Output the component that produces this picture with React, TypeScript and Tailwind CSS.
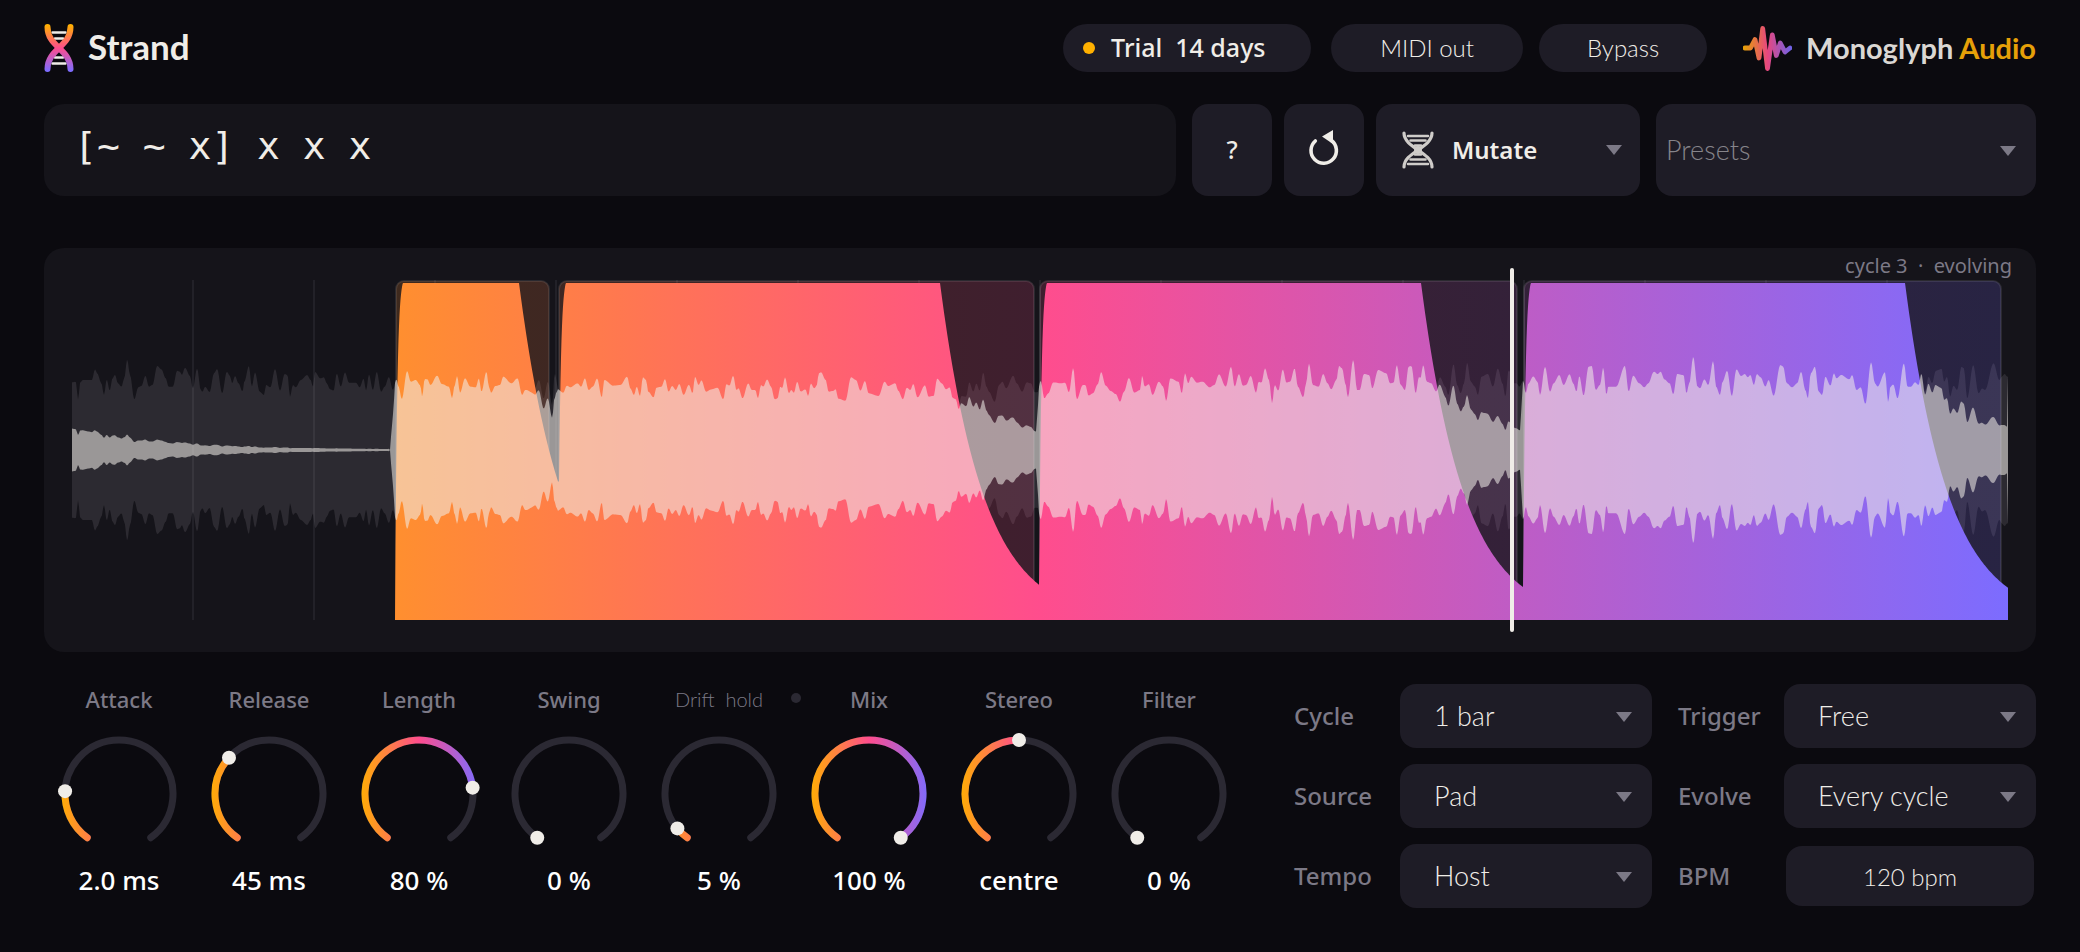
import { useId, useState } from "react";

const UI_FONT = "font-['Noto_Sans','Open_Sans',sans-serif]";
const DISPLAY_FONT = "font-['Lato','Noto_Sans',sans-serif]";

const PLOT_WIDTH = 1936;
const PLOT_TOP = 12;
const PLOT_BOTTOM = 352;
const PLOT_MID = 182;
const ENVELOPE_HEIGHT = 337;
const PLAYHEAD_X = 1440;

// Peak overview in chunks: positions at 2.8 ticks per px, levels at 3 steps per px below `mid`.
const TICKS_PER_PX = 2.8;
const STEPS_PER_PX = 3;

const PEAK_CHUNKS = [
    {
        origin: -32,
        mid: 630,
        data: "90,427 100,425 107,480 112,428 120,420 145,420 154,388 160,400 172,430 179,465 187,418 195,452 203,415 210,404 218,430 228,440 236,415 244,358 252,405 264,478 275,442 284,438 295,407 305,440 315,435 328,378 340,388 352,415 360,440 372,440 384,392 392,395 397,405 406,383 420,408 428,445 440,385 450,450 455,455 462,440 475,456 487,400 496,387 510,460 523,395 532,408 538,430 546,408 556,430 567,455 572,425 585,378 593,440 602,397 615,455 627,465 633,435 645,442 658,387 672,452 685,402 693,405 700,470 708,435 716,442 730,420 748,405 758,420 764,440 770,396 785,415 795,412 803,430 812,448 822,452 831,400 842,440 854,397 865,428 885,428 895,442 906,416 913,452 921,403 932,450 943,395 955,455 965,440 977,411 988,450 998,418 1004,440 1013,477 1028,393 1038,425 1052,420 1065,436 1070,470 1077,417 1085,418 1093,435 1112,407 1125,432 1145,440 1154,475 1160,440 1168,408 1176,458 1190,415 1205,440 1220,442 1229,415 1236,455 1250,395 1257,440 1263,458 1275,438 1288,435 1297,410 1320,430 1337,415 1350,465 1358,450 1385,446 1397,420 1410,475 1422,425 1434,495 1441,400",
    },
    {
        origin: 468,
        mid: 570,
        data: "52,390 65,398 75,377 85,382 105,370 115,380 126,355 136,390 148,380 160,355 173,412 180,360 205,377 225,375 244,350 253,385 263,405 271,380 280,408 288,352 297,360 303,395 318,412 326,383 340,380 350,357 360,395 370,378 380,390 390,372 402,405 417,374 427,400 434,350 444,375 452,361 465,395 480,388 497,383 513,418 522,372 530,377 541,347 550,390 556,385 567,415 583,370 593,390 603,390 610,415 619,375 625,380 636,358 647,380 657,418 665,415 673,380 678,385 686,352 697,400 703,390 711,398 720,365 730,395 743,388 751,408 758,370 768,385 774,378 781,340 787,337 800,360 808,395 820,393 828,388 835,416 855,422 871,352 885,360 897,392 910,363 920,400 948,408 965,365 975,378 995,370 1003,392 1016,418 1027,383 1037,390 1045,372 1057,412 1078,376 1088,410 1102,408 1112,356 1125,370 1137,388 1147,382 1155,410 1165,408 1172,435 1180,408 1193,410 1202,367 1213,395 1222,370 1231,392 1241,337 1250,380 1257,395 1273,425 1285,375 1295,365 1305,385 1325,347 1335,370 1350,395 1363,367 1375,370 1385,397 1393,397",
    },
    {
        origin: 968,
        mid: 630,
        data: "2,422 12,475 23,460 37,427 58,430 70,428 81,457 93,384 103,478 120,435 127,435 136,467 148,460 162,432 171,396 184,437 198,453 212,462 224,485 235,455 249,414 264,458 280,450 286,407 293,440 305,433 315,465 333,425 345,440 353,483 365,415 388,425 397,460 406,400 415,430 423,410 440,428 455,425 475,442 488,435 501,403 520,440 535,380 545,440 557,402 568,437 577,435 590,408 605,458 612,425 620,428 630,385 641,420 650,490 657,435 667,452 680,388 690,428 700,425 713,385 722,440 737,472 745,430 753,370 764,435 780,440 793,402 805,430 815,448 830,420 837,378 846,385 855,430 862,472 877,360 888,450 895,450 907,402 922,405 930,445 947,390 970,400 980,430 990,428 999,375 1010,435 1022,450 1032,380 1040,378 1052,460 1061,410 1065,415 1073,375 1083,425 1095,430 1108,445 1120,412 1135,440 1143,465 1158,372 1168,435 1178,460 1187,430 1196,367 1206,425 1218,440 1226,465 1236,410 1254,402 1268,440 1282,385 1295,430 1303,470 1312,390 1328,430 1335,430 1342,440 1353,422",
    },
    {
        origin: 1428,
        mid: 630,
        data: "72,460 80,430 93,409 105,425 112,465 126,380 140,455 150,430 166,405 178,435 195,403 205,430 214,455 222,408 234,467 248,380 257,378 268,450 280,435 289,382 298,465 303,440 325,440 350,378 360,455 373,407 390,430 404,442 415,430 431,395 441,402 450,395 460,418 475,430 485,463 496,402 514,405 522,460 530,430 541,350 553,440 560,445 572,418 583,435 597,363 605,440 616,465 623,425 636,392 649,468 662,388 675,408 685,402 694,412 701,405 711,435 719,402 730,412 743,440 752,420 766,467 785,375 793,380 803,430 818,442 832,430 843,395 855,450 862,475 870,400 882,380 892,455 902,465 911,410 925,437 935,400 942,415 955,405 978,418 986,405 998,450 1010,442 1023,492 1039,367 1050,430 1057,440 1078,397 1087,487 1093,440 1101,433 1113,475 1131,370 1141,440 1151,440 1162,427 1172,435 1180,400 1190,455 1200,410 1210,430 1220,392 1237,387 1243,425 1252,410 1260,470 1270,437 1280,450 1292,380 1299,385 1308,475 1325,375 1340,460 1350,445 1358,450 1382,370 1398,420 1405,410 1413,402 1420,410",
    },
];

const PEAKS = PEAK_CHUNKS.flatMap(({ origin, mid, data }) =>
    data.split(" ").map((pair) => {
        const [tick, step] = pair.split(",").map(Number);
        return { x: origin + tick / TICKS_PER_PX, level: (mid - step) / STEPS_PER_PX };
    }),
);

const STEPS = [
    { start: 323, release: 447, next: 486, gateEnd: 478, duckFrom: 455 },
    { start: 486, release: 868, next: 967, gateEnd: 963, duckFrom: 879 },
    { start: 967, release: 1349, next: 1451, gateEnd: 1446, duckFrom: 1360 },
    { start: 1451, release: 1833, next: 1936, gateEnd: 1930, duckFrom: 1849 },
];

function sourceLevels() {
    const levels: number[] = [];
    let i = 0;
    for (let x = 0; x <= PLOT_WIDTH; x++) {
        while (i < PEAKS.length - 2 && PEAKS[i + 1].x < x) i++;
        const a = PEAKS[i];
        const b = PEAKS[i + 1];
        const t = Math.min(1, Math.max(0, (x - a.x) / (b.x - a.x)));
        const eased = (1 - Math.cos(t * Math.PI)) / 2;
        levels.push(a.level + (b.level - a.level) * eased);
    }
    return levels;
}

function outputGain(x: number) {
    if (x < 318) return 0.31 * Math.exp(-x / 86) + 0.008;
    if (x < 323) return (x - 318) / 5;
    const step = STEPS.find((s) => x < s.next);
    if (!step || x < step.duckFrom) return 1;
    const ducked = Math.exp((step.duckFrom - x) / 75);
    const attack = step.next === PLOT_WIDTH ? 0 : Math.max(0, (x - step.next + 3) / 3);
    return ducked + (1 - ducked) * attack;
}

function mirrorPath(levels: number[]) {
    const top = levels.map((level, x) => `${x},${(PLOT_MID - level).toFixed(1)}`);
    const bottom = levels.map((level, x) => `${x},${(PLOT_MID + level).toFixed(1)}`).reverse();
    return `M${top.join("L")}L${bottom.join("L")}Z`;
}

function envelopePath() {
    let d = `M${STEPS[0].start},${PLOT_BOTTOM}`;
    let level = 0;
    for (const { start, release, next } of STEPS) {
        const held = level;
        for (let t = 0; t <= 8; t += 0.5) {
            level = Math.min(1, Math.max(held, 1.025 * (1 - Math.exp(-t / 2.1))));
            d += `L${start + t},${(PLOT_BOTTOM - ENVELOPE_HEIGHT * level).toFixed(1)}`;
        }
        for (let x = release; x <= next; x++) {
            level = Math.exp(-0.0228 * (x - release));
            d += `L${x},${(PLOT_BOTTOM - ENVELOPE_HEIGHT * level).toFixed(1)}`;
        }
    }
    return `${d}V${PLOT_BOTTOM}Z`;
}

const SOURCE = sourceLevels();
const SOURCE_PATH = mirrorPath(SOURCE);
const OUTPUT_PATH = mirrorPath(SOURCE.map((level, x) => level * outputGain(x)));
const ENVELOPE_PATH = envelopePath();

function BrandStops() {
    return (
        <>
            <stop offset="0" stopColor="#ffb000" />
            <stop offset="0.5" stopColor="#ff4d8d" />
            <stop offset="1" stopColor="#7c6cff" />
        </>
    );
}

function Caret({ className = "" }: { className?: string }) {
    return (
        <svg viewBox="0 0 16 10" className={`h-[10px] w-4 fill-[#7c7986] ${className}`} aria-hidden>
            <path d="M0 0H16L8 10Z" />
        </svg>
    );
}

function StrandLogo() {
    return (
        <svg viewBox="0 0 30 50" className="h-[50px] w-[30px]" fill="none" strokeLinecap="round" aria-hidden>
            <defs>
                <linearGradient id="strand" gradientUnits="userSpaceOnUse" x1="0" y1="2" x2="0" y2="48">
                    <BrandStops />
                </linearGradient>
            </defs>
            <path d="M8.5 9.5H21.5M11 15.5H19M11 34.5H19M8.5 40.5H21.5" stroke="#f0ede8" strokeWidth="2.4" />
            <g stroke="url(#strand)" strokeWidth="6">
                <path d="M3.5 4C3.5 24 26.5 26 26.5 46" />
                <path d="M26.5 4C26.5 24 3.5 26 3.5 46" />
            </g>
        </svg>
    );
}

function HelixIcon() {
    return (
        <svg
            viewBox="0 0 32 38"
            className="h-[38px] w-8"
            fill="none"
            stroke="#cfccc9"
            strokeLinecap="round"
            aria-hidden
        >
            <path d="M6 5H26M8.5 9.5H23.5M13 14.5H19M13 23.5H19M8.5 28.5H23.5M6 33H26" strokeWidth="2.6" />
            <path d="M2 2C2 17 30 21 30 36M30 2C30 17 2 21 2 36" strokeWidth="3.2" />
            <circle cx="16" cy="19" r="3" strokeWidth="2" />
        </svg>
    );
}

function ResetIcon() {
    return (
        <svg viewBox="0 0 32 38" className="h-[38px] w-8" aria-hidden>
            <path
                d="M7.3 12A12.7 12.7 0 1 0 23.5 11.5"
                fill="none"
                stroke="#f0ede8"
                strokeWidth="3.6"
                strokeLinecap="round"
            />
            <path d="M25 1V15L14 7.5Z" fill="#f0ede8" />
        </svg>
    );
}

function MonoglyphLogo() {
    return (
        <svg viewBox="0 0 49 45" className="h-[45px] w-[49px]" fill="none" aria-hidden>
            <defs>
                <linearGradient id="mono" gradientUnits="userSpaceOnUse" x1="1" y1="0" x2="48" y2="0">
                    <stop offset="0" stopColor="#e6a008" />
                    <stop offset="0.5" stopColor="#e6477f" />
                    <stop offset="1" stopColor="#7062e6" />
                </linearGradient>
            </defs>
            <path
                d="M2 22H7.5L12 13.5L16 32L19.7 2.5L24.5 42.5L29.3 9L33.3 29.5L37.3 17L42 26L47 22"
                stroke="url(#mono)"
                strokeWidth="4.8"
                strokeLinecap="round"
                strokeLinejoin="round"
            />
        </svg>
    );
}

function Header() {
    return (
        <header className="flex h-12 items-center">
            <div className="flex flex-1 items-center gap-[14px]">
                <StrandLogo />
                <h1 className={`${DISPLAY_FONT} pb-1 text-[35px] leading-10 font-bold`}>Strand</h1>
            </div>
            <button
                type="button"
                className="flex h-12 w-[248px] items-center gap-4 rounded-full bg-[#1e1c26] pl-5 text-[25px] font-medium whitespace-pre"
            >
                <span className="h-3 w-3 rounded-full bg-[#ffb000]" />
                {"Trial  14 days"}
            </button>
            <button
                type="button"
                className={`${DISPLAY_FONT} ml-5 h-12 w-48 rounded-full bg-[#1e1c26] text-[24px] font-light`}
            >
                MIDI out
            </button>
            <button
                type="button"
                className={`${DISPLAY_FONT} ml-4 h-12 w-[168px] rounded-full bg-[#1e1c26] text-[24px] font-light`}
            >
                Bypass
            </button>
            <a
                href="#"
                className={`${DISPLAY_FONT} ml-9 flex items-center gap-[14px] text-[29px] leading-10 font-bold text-[#dad7d3]`}
            >
                <MonoglyphLogo />
                <span>
                    Monoglyph <span className="text-[#e6a008]">Audio</span>
                </span>
            </a>
        </header>
    );
}

function PatternBar() {
    const [pattern, setPattern] = useState("[~ ~ x] x x x");
    return (
        <div className="mt-8 flex h-[92px]">
            <input
                aria-label="Pattern"
                value={pattern}
                spellCheck={false}
                onChange={(e) => {
                    setPattern(e.target.value);
                }}
                className="min-w-0 flex-1 rounded-[20px] bg-[#15141a] px-[30px] pb-2 font-['DejaVu_Sans_Mono',monospace] text-[38px] outline-none"
            />
            <button type="button" aria-label="Help" className="ml-4 w-20 rounded-2xl bg-[#1e1c26] text-[25px] font-medium">
                ?
            </button>
            <button
                type="button"
                aria-label="Reset"
                className="ml-3 flex w-20 items-center justify-center rounded-2xl bg-[#1e1c26] pb-1"
            >
                <ResetIcon />
            </button>
            <button
                type="button"
                className="ml-3 flex w-[264px] items-center gap-[18px] rounded-2xl bg-[#1e1c26] pr-[18px] pl-[26px] text-[24px] font-semibold"
            >
                <HelixIcon />
                <span className="flex-1 text-left">Mutate</span>
                <Caret />
            </button>
            <div className="relative ml-4 w-[380px]">
                <select
                    aria-label="Presets"
                    className={`${DISPLAY_FONT} h-full w-full appearance-none rounded-2xl bg-[#1e1c26] px-[10px] text-[27px] font-light text-[#86848a] outline-none`}
                >
                    <option>Presets</option>
                </select>
                <Caret className="pointer-events-none absolute top-[42px] right-5" />
            </div>
        </div>
    );
}

function EvolutionView() {
    return (
        <section className="relative mt-[52px] rounded-[20px] bg-[#15141a] px-7 py-5">
            <p className="absolute top-1 right-6 text-[20px] leading-7 whitespace-pre text-[#7c7986]">
                {"cycle 3  ·  evolving"}
            </p>
            <svg viewBox="0 0 1936 364" preserveAspectRatio="none" className="block h-[364px] w-full overflow-visible">
                <defs>
                    <linearGradient id="time" gradientUnits="userSpaceOnUse" x1="0" y1="0" x2={PLOT_WIDTH} y2="0">
                        <BrandStops />
                    </linearGradient>
                </defs>
                {Array.from({ length: 15 }, (_, i) => (
                    <rect key={i} x={(i + 1) * 121 - 1} y={PLOT_TOP} width="2" height="340" fill="#222128" />
                ))}
                <path d={SOURCE_PATH} fill="#f0e4f0" fillOpacity="0.11" />
                {STEPS.map(({ start, gateEnd }) => (
                    <rect
                        key={start}
                        x={start + 1}
                        y={PLOT_TOP + 1}
                        width={gateEnd - start - 2}
                        height="338"
                        rx="8"
                        fill="url(#time)"
                        fillOpacity="0.18"
                        stroke="#f0ede8"
                        strokeOpacity="0.1"
                        strokeWidth="2"
                    />
                ))}
                <path d={ENVELOPE_PATH} fill="url(#time)" />
                <path d={OUTPUT_PATH} fill="#f0ede8" fillOpacity="0.56" />
                <rect x={PLAYHEAD_X - 2} y="0" width="4" height="364" rx="2" fill="#f0ede8" />
            </svg>
        </section>
    );
}

const KNOB_RADIUS = 54;

function knobPoint(value: number) {
    const angle = ((value * 288 - 144) * Math.PI) / 180;
    return { x: 64 + KNOB_RADIUS * Math.sin(angle), y: 64 - KNOB_RADIUS * Math.cos(angle) };
}

function knobArc(value: number) {
    const from = knobPoint(0);
    const to = knobPoint(value);
    return `M${from.x} ${from.y}A${KNOB_RADIUS} ${KNOB_RADIUS} 0 ${value * 288 > 180 ? 1 : 0} 1 ${to.x} ${to.y}`;
}

interface KnobProps {
    label: string;
    value: number;
    text: string;
    hold?: boolean;
}

function Knob({ label, value: initial, text, hold }: KnobProps) {
    const id = useId();
    const [value, setValue] = useState(initial);
    const thumb = knobPoint(value);
    return (
        <div className="flex flex-col items-center">
            {hold ? (
                <div className="relative flex w-full justify-center">
                    <label
                        htmlFor={id}
                        className={`${DISPLAY_FONT} text-[20px] leading-[30px] font-light whitespace-pre text-[#7c7986]`}
                    >
                        {label}
                    </label>
                    <button
                        type="button"
                        aria-label="Hold drift"
                        className="absolute top-[9px] -right-[7px] h-[10px] w-[10px] rounded-full bg-[#2b2933]"
                    />
                </div>
            ) : (
                <label htmlFor={id} className="text-[22px] leading-[30px] font-medium text-[#7c7986]">
                    {label}
                </label>
            )}
            <div className="relative mt-4 h-32 w-32">
                <svg viewBox="0 0 128 128" className="h-32 w-32" fill="none" strokeWidth="7" strokeLinecap="round">
                    <defs>
                        <linearGradient id={`${id}-g`} gradientUnits="userSpaceOnUse" x1="4" y1="0" x2="124" y2="0">
                            <BrandStops />
                        </linearGradient>
                    </defs>
                    <path d={knobArc(1)} stroke="#2b2933" />
                    {value > 0 && <path d={knobArc(value)} stroke={`url(#${id}-g)`} />}
                    <circle cx={thumb.x} cy={thumb.y} r="7" fill="#f0ede8" />
                </svg>
                <input
                    id={id}
                    type="range"
                    min={0}
                    max={1}
                    step={0.001}
                    value={value}
                    onChange={(e) => {
                        setValue(Number(e.target.value));
                    }}
                    className="absolute inset-0 h-full w-full cursor-pointer opacity-0"
                />
            </div>
            <output htmlFor={id} className="mt-1 text-[26px] leading-9 font-medium text-white">
                {text}
            </output>
        </div>
    );
}

const KNOBS: KnobProps[] = [
    { label: "Attack", value: 0.198, text: "2.0 ms" },
    { label: "Release", value: 0.334, text: "45 ms" },
    { label: "Length", value: 0.789, text: "80 %" },
    { label: "Swing", value: 0, text: "0 %" },
    { label: "Drift  hold", value: 0.05, text: "5 %", hold: true },
    { label: "Mix", value: 1, text: "100 %" },
    { label: "Stereo", value: 0.5, text: "centre" },
    { label: "Filter", value: 0, text: "0 %" },
];

function SelectField({ label, value }: { label: string; value: string }) {
    const id = useId();
    return (
        <>
            <label htmlFor={id} className="text-[24px] leading-8 font-medium text-[#7c7986]">
                {label}
            </label>
            <div className="relative">
                <select
                    id={id}
                    className={`${DISPLAY_FONT} h-16 w-full appearance-none rounded-2xl bg-[#1e1c26] px-[34px] text-[27px] font-light outline-none`}
                >
                    <option>{value}</option>
                </select>
                <Caret className="pointer-events-none absolute top-7 right-5" />
            </div>
        </>
    );
}

function Settings() {
    return (
        <div className="grid grid-cols-[106px_252px_26px_106px_252px] items-center gap-y-4">
            <SelectField label="Cycle" value="1 bar" />
            <span />
            <SelectField label="Trigger" value="Free" />
            <SelectField label="Source" value="Pad" />
            <span />
            <SelectField label="Evolve" value="Every cycle" />
            <SelectField label="Tempo" value="Host" />
            <span />
            <label htmlFor="bpm" className="text-[24px] leading-8 font-medium text-[#7c7986]">
                BPM
            </label>
            <input
                id="bpm"
                defaultValue="120 bpm"
                className={`${DISPLAY_FONT} mx-[2px] h-[60px] min-w-0 rounded-2xl bg-[#1e1c26] text-center text-[24px] font-light outline-none`}
            />
        </div>
    );
}

export default function App() {
    return (
        <main className={`${UI_FONT} min-h-screen bg-[#0b0a0f] px-11 pt-6 pb-11 text-[#f0ede8]`}>
            <Header />
            <PatternBar />
            <EvolutionView />
            <div className="mt-8 flex items-start gap-[50px]">
                <div className="grid flex-1 grid-cols-8">
                    {KNOBS.map((knob) => (
                        <Knob key={knob.label} {...knob} />
                    ))}
                </div>
                <Settings />
            </div>
        </main>
    );
}
